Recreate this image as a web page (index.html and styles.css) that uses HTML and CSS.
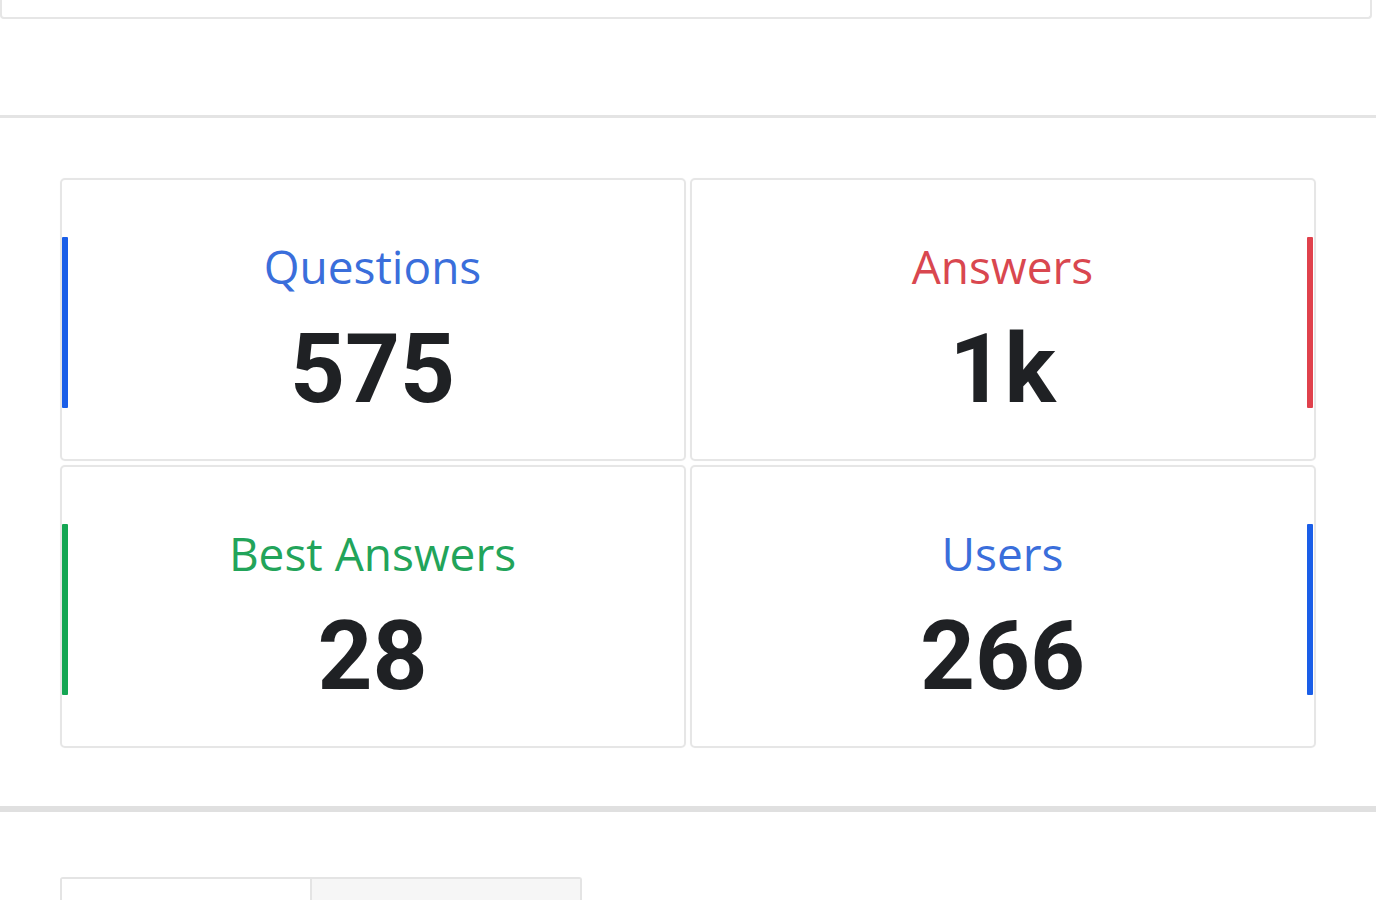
FILE: index.html
```html
<!DOCTYPE html>
<html lang="en">
<head>
<meta charset="utf-8">
<title>Stats</title>
<link rel="stylesheet" href="styles.css">
</head>
<body>
  <div class="top-box"></div>
  <div class="top-section"></div>
  <section class="stats">
    <div class="stats-grid">
      <div class="card">
        <span class="bar bar-blue"></span>
        <div class="card-body">
          <div class="label label-blue">Questions</div>
          <div class="value">575</div>
        </div>
        <span class="bar-space"></span>
      </div>
      <div class="card">
        <span class="bar-space"></span>
        <div class="card-body">
          <div class="label label-red">Answers</div>
          <div class="value">1k</div>
        </div>
        <span class="bar bar-red bar-right"></span>
      </div>
      <div class="card">
        <span class="bar bar-green"></span>
        <div class="card-body">
          <div class="label label-green">Best Answers</div>
          <div class="value">28</div>
        </div>
        <span class="bar-space"></span>
      </div>
      <div class="card">
        <span class="bar-space"></span>
        <div class="card-body">
          <div class="label label-blue">Users</div>
          <div class="value">266</div>
        </div>
        <span class="bar bar-blue bar-right"></span>
      </div>
    </div>
  </section>
  <div class="divider"></div>
  <div class="tabs">
    <div class="tab tab-active"></div>
    <div class="tab tab-muted"></div>
  </div>
</body>
</html>
```

FILE: styles.css
```css
html, body {
  margin: 0;
  padding: 0;
  background: #ffffff;
  overflow: hidden;
}

body {
  font-family: "Open Sans", "Liberation Sans", sans-serif;
  height: 900px;
}

.top-box {
  box-sizing: border-box;
  width: 1372px;
  height: 19px;
  border: 2px solid #e6e6e6;
  border-top: none;
  border-radius: 0 0 4px 4px;
}

.top-section {
  height: 96px;
  border-bottom: 3px solid #e4e4e4;
}

.stats {
  padding: 60px 60px 0 60px;
}

.stats-grid {
  display: grid;
  grid-template-columns: 626px 626px;
  grid-auto-rows: 283px;
  gap: 4px;
}

.card {
  box-sizing: border-box;
  display: grid;
  grid-template-columns: 6px 1fr 7px;
  align-items: start;
  border: 2px solid #e6e6e6;
  border-radius: 5px;
  padding-top: 57px;
  box-shadow: 0 0 1px rgba(0, 0, 0, 0.06);
}

.bar {
  display: block;
  width: 6px;
  height: 171px;
  border-radius: 1px;
}

.bar-right {
  margin-right: 1px;
}

.bar-blue { background: #1a5ee8; }
.bar-red { background: #e0414c; }
.bar-green { background: #14a653; }

.card-body {
  text-align: center;
}

.label {
  font-size: 46px;
  line-height: 55px;
  font-weight: 400;
  margin-top: 2px;
}

.label-blue { color: #3a6edb; }
.label-red { color: #d9474f; }
.label-green { color: #22a45a; }

.value {
  font-family: Roboto, "Liberation Sans", sans-serif;
  font-weight: 700;
  font-size: 96px;
  line-height: 100px;
  margin-top: 25px;
  color: #1f2124;
}

.divider {
  margin-top: 58px;
  height: 6px;
  background: #e0e0e0;
}

.tabs {
  display: flex;
  margin: 65px 0 0 60px;
  width: 522px;
  height: 40px;
  box-sizing: border-box;
  border: 2px solid #e4e4e4;
  border-bottom: none;
  border-radius: 3px 3px 0 0;
}

.tab {
  height: 100%;
}

.tab-active {
  width: 248px;
  background: #ffffff;
  border-right: 2px solid #e4e4e4;
}

.tab-muted {
  flex: 1;
  background: #f6f6f6;
}
```
